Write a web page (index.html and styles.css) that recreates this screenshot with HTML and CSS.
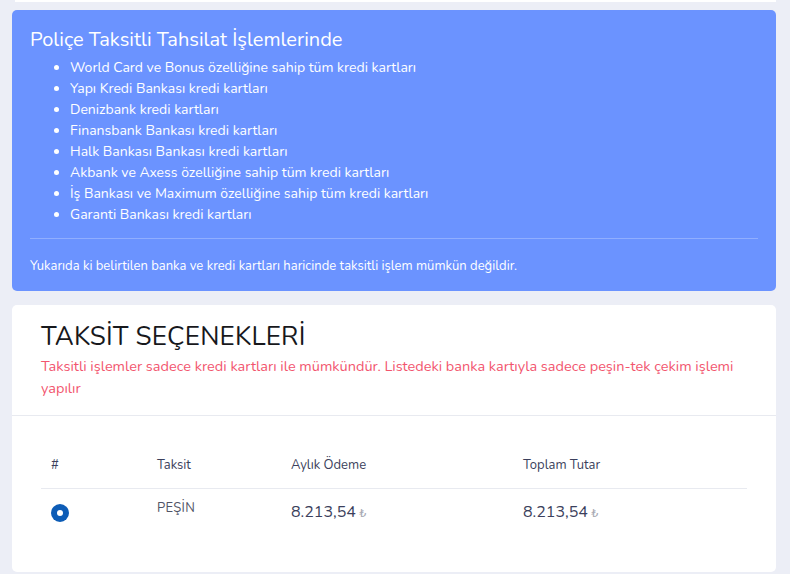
FILE: index.html
```html
<!DOCTYPE html>
<html lang="tr">
<head>
<meta charset="utf-8">
<title>Taksit Seçenekleri</title>
<link rel="stylesheet" href="styles.css">
</head>
<body>
<div class="page">
  <div class="top-edge"></div>

  <div class="alert">
    <h4 class="alert-title">Poliçe Taksitli Tahsilat İşlemlerinde</h4>
    <ul class="bank-list">
      <li>World Card ve Bonus özelliğine sahip tüm kredi kartları</li>
      <li>Yapı Kredi Bankası kredi kartları</li>
      <li>Denizbank kredi kartları</li>
      <li>Finansbank Bankası kredi kartları</li>
      <li>Halk Bankası Bankası kredi kartları</li>
      <li>Akbank ve Axess özelliğine sahip tüm kredi kartları</li>
      <li>İş Bankası ve Maximum özelliğine sahip tüm kredi kartları</li>
      <li>Garanti Bankası kredi kartları</li>
    </ul>
    <hr class="alert-rule">
    <p class="alert-note">Yukarıda ki belirtilen banka ve kredi kartları haricinde taksitli işlem mümkün değildir.</p>
  </div>

  <div class="card">
    <div class="card-head">
      <h2 class="card-title">TAKSİT SEÇENEKLERİ</h2>
      <p class="card-warn">Taksitli işlemler sadece kredi kartları ile mümkündür. Listedeki banka kartıyla sadece peşin-tek çekim işlemi yapılır</p>
    </div>
    <div class="card-body">
      <table class="plan-table">
        <thead>
          <tr>
            <th class="c-sel">#</th>
            <th class="c-count">Taksit</th>
            <th class="c-month">Aylık Ödeme</th>
            <th class="c-total">Toplam Tutar</th>
          </tr>
        </thead>
        <tbody>
          <tr>
            <td class="c-sel"><span class="radio checked"></span></td>
            <td class="c-count"><span class="plan-name">PEŞİN</span></td>
            <td class="c-month money"><span class="amount">8.213,54</span> <span class="cur">₺</span></td>
            <td class="c-total money"><span class="amount">8.213,54</span> <span class="cur">₺</span></td>
          </tr>
        </tbody>
      </table>
    </div>
  </div>
</div>
</body>
</html>
```

FILE: styles.css
```css
* {
  box-sizing: border-box;
}

html,
body {
  margin: 0;
  padding: 0;
}

body {
  background: #eceef6;
  font-family: "Nunito", "Lato", "Noto Sans", sans-serif;
  color: #3b3f5c;
  width: 790px;
  height: 574px;
  overflow: hidden;
}

.page {
  padding: 0 14px 0 12px;
}

.top-edge {
  height: 2px;
  margin-left: 3px;
  background: #ffffff;
}

/* blue info box */
.alert {
  margin-top: 8px;
  background: #6b93ff;
  border-radius: 5px;
  color: #ffffff;
  padding: 17px 18px 16px 18px;
}

.alert-title {
  margin: 0 0 4px 0;
  font-size: 20px;
  font-weight: 400;
  line-height: 26px;
}

.bank-list {
  margin: 0;
  padding-left: 40px;
  font-size: 14px;
  line-height: 21px;
}

.alert-rule {
  border: 0;
  border-top: 1px solid rgba(255, 255, 255, 0.25);
  margin: 13px 0 18px 0;
}

.alert-note {
  margin: 0;
  font-size: 13px;
  line-height: 18px;
}

/* options card */
.card {
  margin-top: 14px;
  background: #ffffff;
  border-radius: 5px;
  height: 267px;
}

.card-head {
  padding: 17px 29px 16px 29px;
  border-bottom: 1px solid #e8eaf0;
}

.card-title {
  margin: 0;
  font-size: 26px;
  font-weight: 400;
  line-height: 30px;
  color: #17181c;
  letter-spacing: 0.2px;
}

.card-warn {
  margin: 3px 0 0 0;
  font-size: 14.5px;
  line-height: 22px;
  color: #f2556e;
}

.card-body {
  padding: 30px 29px 0 29px;
}

.plan-table {
  width: 706px;
  border-collapse: collapse;
  font-size: 13px;
}

.plan-table th {
  text-align: left;
  font-weight: 400;
  color: #3b3f5c;
  padding: 10px 10px 14px 10px;
  border-bottom: 1px solid #e8eaf0;
}

.plan-table td {
  padding: 10px 10px;
  vertical-align: top;
}

.plan-table td.money {
  padding-top: 12px;
}

.c-sel { width: 106px; }
.c-count { width: 134px; }
.c-month { width: 232px; }
.c-total { width: 234px; }

.radio {
  display: inline-block;
  width: 18px;
  height: 18px;
  border-radius: 50%;
  background: #0d5cb6;
  position: relative;
  margin-top: 5px;
}

.radio.checked::after {
  content: "";
  position: absolute;
  left: 6px;
  top: 6px;
  width: 6px;
  height: 6px;
  border-radius: 50%;
  background: #ffffff;
}

.plan-name {
  font-size: 13px;
  color: #515365;
  letter-spacing: 0.3px;
}

.amount {
  font-size: 16px;
  color: #3b3f5c;
}

.cur {
  font-family: "DejaVu Sans", sans-serif;
  font-size: 11px;
  color: #a7a9b3;
}
```
